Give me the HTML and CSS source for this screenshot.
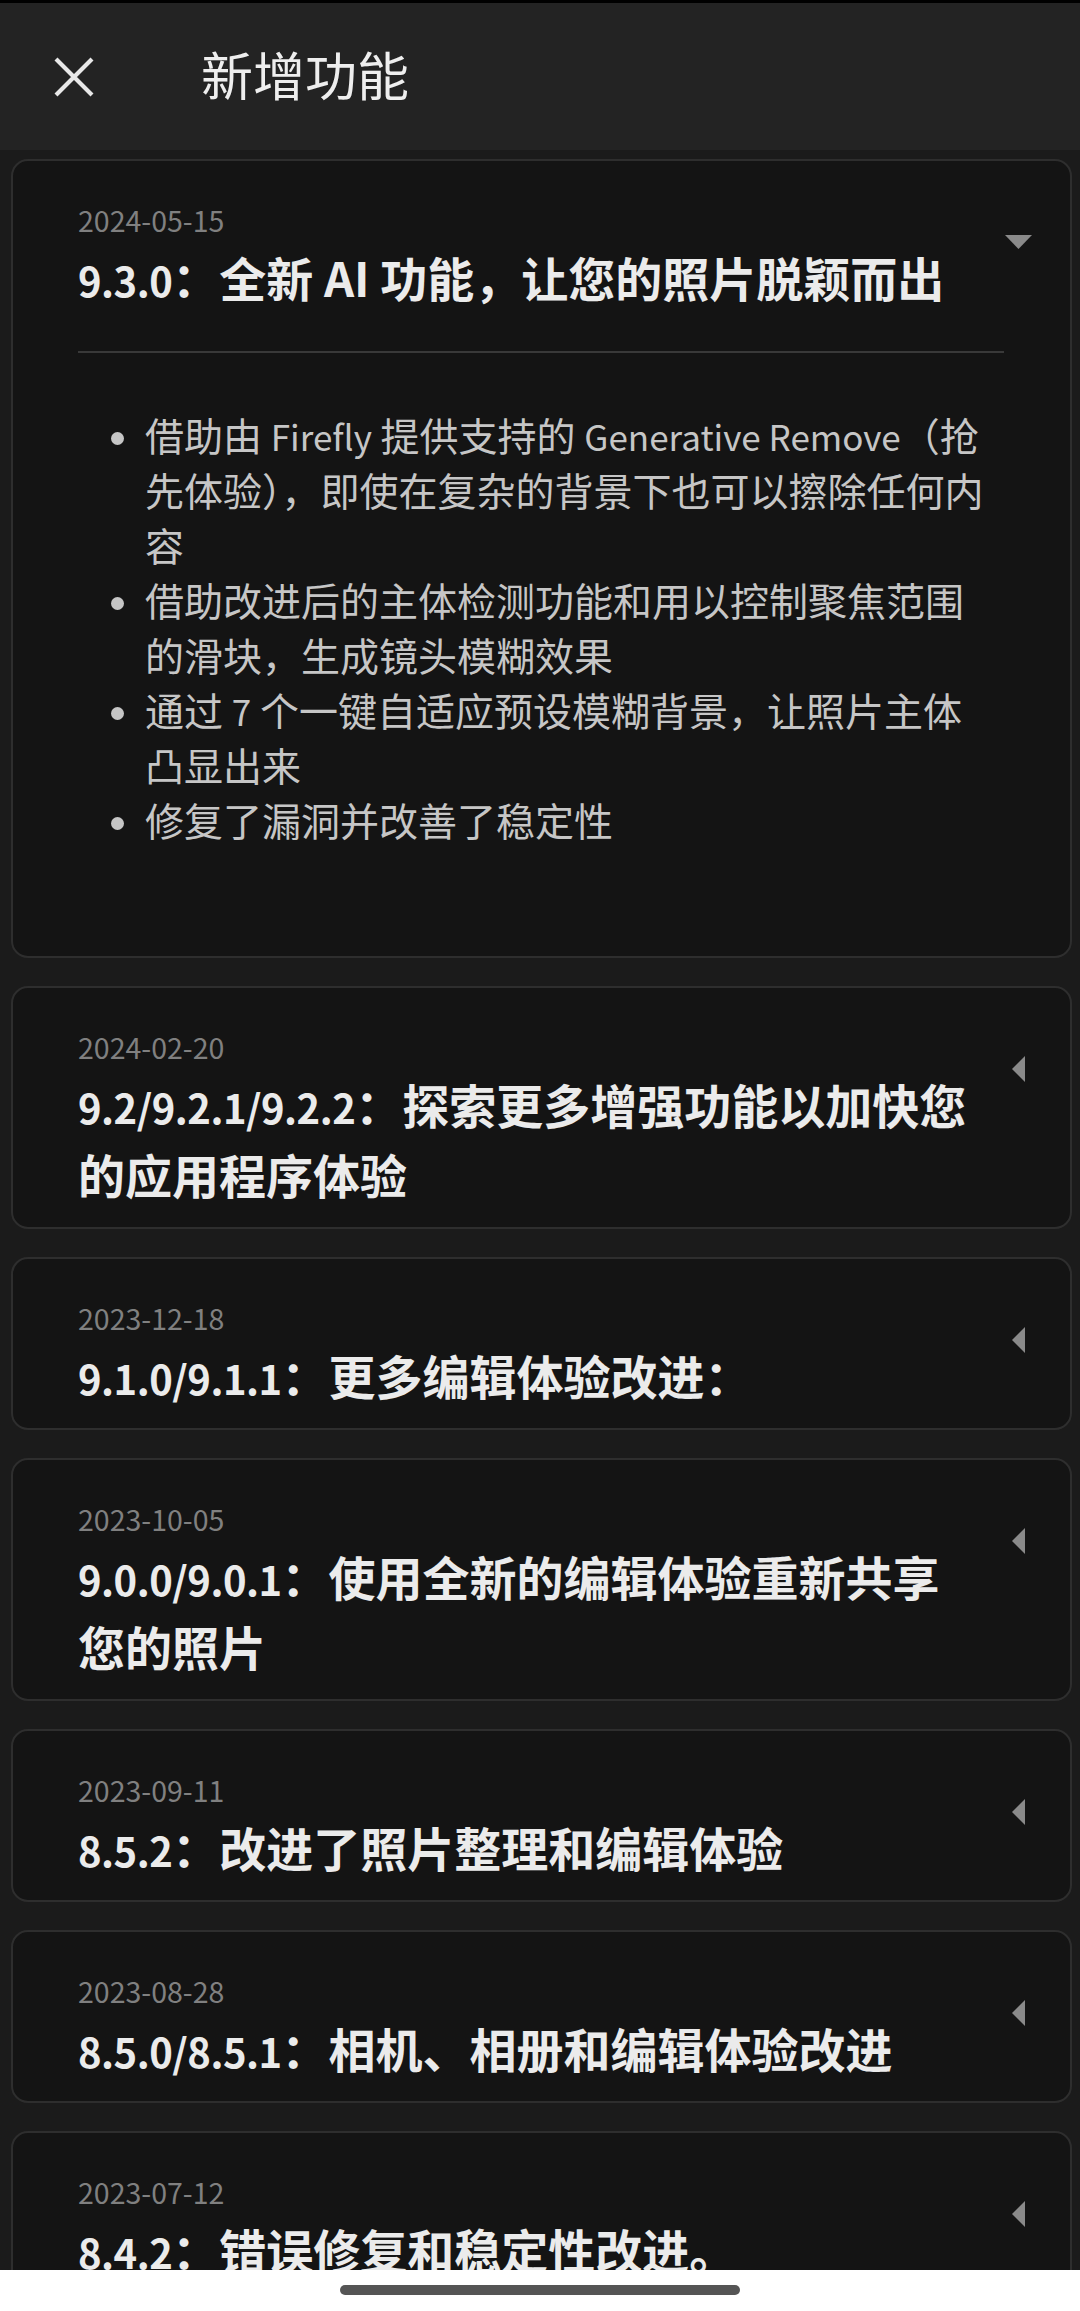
FILE: index.html
```html
<!DOCTYPE html>
<html lang="zh-CN">
<head>
    <meta charset="UTF-8">
    <meta name="viewport" content="width=device-width, initial-scale=1.0">
    <title>新增功能</title>
    <link rel="stylesheet" href="styles.css">
</head>
<body>
    <div class="header">
        <button class="close-btn" aria-label="关闭">
            <svg width="40" height="40" viewBox="0 0 40 40">
                <path d="M2 2 L38 38 M38 2 L2 38" stroke="#e8e8e8" stroke-width="4.2" fill="none"/>
            </svg>
        </button>
        <h1>新增功能</h1>
    </div>

    <div class="release-list">
        <div class="release open">
            <div class="release-head">
                <div class="release-text">
                    <div class="release-date">2024-05-15</div>
                    <div class="release-title"><span class="ver">9.3.0</span>：全新 AI 功能，让您的照片脱颖而出</div>
                </div>
                <span class="caret">
                    <svg width="27" height="14" viewBox="0 0 27 14"><polygon points="0,0 27,0 13.5,14" fill="#8a8a8a"/></svg>
                </span>
            </div>
            <div class="release-body">
                <ul>
                    <li><span>借助由 <span class="latin">Firefly</span> 提供支持的 <span class="latin">Generative Remove</span>（抢先体验），即使在复杂的背景下也可以擦除任何内容</span></li>
                    <li><span>借助改进后的主体检测功能和用以控制聚焦范围的滑块，生成镜头模糊效果</span></li>
                    <li><span>通过 <span class="latin">7</span> 个一键自适应预设模糊背景，让照片主体凸显出来</span></li>
                    <li><span>修复了漏洞并改善了稳定性</span></li>
                </ul>
            </div>
        </div>

        <div class="release">
            <div class="release-head">
                <div class="release-text">
                    <div class="release-date">2024-02-20</div>
                    <div class="release-title"><span class="ver">9.2/9.2.1/9.2.2</span>：探索更多增强功能以加快您<br>的应用程序体验</div>
                </div>
                <span class="caret">
                    <svg width="13" height="26" viewBox="0 0 13 26"><polygon points="13,0 13,26 0,13" fill="#8a8a8a"/></svg>
                </span>
            </div>
        </div>

        <div class="release">
            <div class="release-head">
                <div class="release-text">
                    <div class="release-date">2023-12-18</div>
                    <div class="release-title"><span class="ver">9.1.0/9.1.1</span>：更多编辑体验改进：</div>
                </div>
                <span class="caret">
                    <svg width="13" height="26" viewBox="0 0 13 26"><polygon points="13,0 13,26 0,13" fill="#8a8a8a"/></svg>
                </span>
            </div>
        </div>

        <div class="release">
            <div class="release-head">
                <div class="release-text">
                    <div class="release-date">2023-10-05</div>
                    <div class="release-title"><span class="ver">9.0.0/9.0.1</span>：使用全新的编辑体验重新共享<br>您的照片</div>
                </div>
                <span class="caret">
                    <svg width="13" height="26" viewBox="0 0 13 26"><polygon points="13,0 13,26 0,13" fill="#8a8a8a"/></svg>
                </span>
            </div>
        </div>

        <div class="release">
            <div class="release-head">
                <div class="release-text">
                    <div class="release-date">2023-09-11</div>
                    <div class="release-title"><span class="ver">8.5.2</span>：改进了照片整理和编辑体验</div>
                </div>
                <span class="caret">
                    <svg width="13" height="26" viewBox="0 0 13 26"><polygon points="13,0 13,26 0,13" fill="#8a8a8a"/></svg>
                </span>
            </div>
        </div>

        <div class="release">
            <div class="release-head">
                <div class="release-text">
                    <div class="release-date">2023-08-28</div>
                    <div class="release-title"><span class="ver">8.5.0/8.5.1</span>：相机、相册和编辑体验改进</div>
                </div>
                <span class="caret">
                    <svg width="13" height="26" viewBox="0 0 13 26"><polygon points="13,0 13,26 0,13" fill="#8a8a8a"/></svg>
                </span>
            </div>
        </div>

        <div class="release">
            <div class="release-head">
                <div class="release-text">
                    <div class="release-date">2023-07-12</div>
                    <div class="release-title"><span class="ver">8.4.2</span>：错误修复和稳定性改进。</div>
                </div>
                <span class="caret">
                    <svg width="13" height="26" viewBox="0 0 13 26"><polygon points="13,0 13,26 0,13" fill="#8a8a8a"/></svg>
                </span>
            </div>
        </div>
    </div>

    <!-- system navigation bar -->
    <div class="nav-bar">
        <div class="nav-handle"></div>
    </div>
</body>
</html>
```

FILE: styles.css
```css
body {
    font-family: "Noto Sans CJK SC", "Noto Sans", sans-serif;
    margin: 0;
    padding: 0;
    background-color: #1b1b1b;
    color: #ebebeb;
}

.header {
    display: flex;
    align-items: center;
    height: 147px;
    padding-left: 54px;
    background-color: #232323;
    border-top: 3px solid #000;
}

    .header h1 {
        margin: 0 0 0 107px;
        padding-bottom: 5px;
        font-size: 52px;
        font-weight: 400;
        line-height: 1;
        color: #eeeeee;
    }

.close-btn {
    display: flex;
    padding: 0;
    border: none;
    background: none;
    cursor: pointer;
}

.release-list {
    display: flex;
    flex-direction: column;
    gap: 28px;
    padding: 9px 8px 40px 11px;
}

.release {
    background-color: #141414;
    border: 2px solid #2e2e2e;
    border-radius: 17px;
    padding: 0 0 18px 65px;
}

.release-head {
    display: flex;
    align-items: flex-start;
}

.release-text {
    flex: 1;
    min-width: 0;
    padding-top: 39px;
}

.release-date {
    font-size: 28.5px;
    line-height: 40px;
    color: #808080;
}

.release-title {
    margin-top: 2px;
    font-size: 47px;
    line-height: 70px;
    font-weight: 700;
    color: #ebebeb;
}

    .release-title .ver {
        font-size: 40px;
        line-height: 1;
        letter-spacing: -0.5px;
    }

.caret {
    display: flex;
    align-items: center;
    justify-content: center;
    width: 27px;
    height: 27px;
    margin: 67px 38px 0 0;
}

.release-body {
    margin-right: 66px;
    margin-top: 39px;
    border-top: 2px solid #393939;
}

    .release-body ul {
        list-style: none;
        margin: 54px 0 91px 0;
        padding: 0 11px 0 0;
    }

    .release-body li {
        display: flex;
        font-size: 39px;
        line-height: 55px;
        color: #c6c6c6;
    }

        .release-body li::before {
            content: "";
            flex: none;
            width: 13px;
            height: 13px;
            margin: 25px 21px 0 33px;
            border-radius: 50%;
            background-color: #c6c6c6;
        }

    .release-body .latin {
        font-size: 35px;
        line-height: 1;
    }

.nav-bar {
    position: fixed;
    left: 0;
    right: 0;
    bottom: 0;
    height: 41px;
    background-color: #ffffff;
    display: flex;
    justify-content: center;
    padding-top: 15px;
    box-sizing: border-box;
}

.nav-handle {
    width: 400px;
    height: 10px;
    border-radius: 5px;
    background-color: #555555;
}
```
